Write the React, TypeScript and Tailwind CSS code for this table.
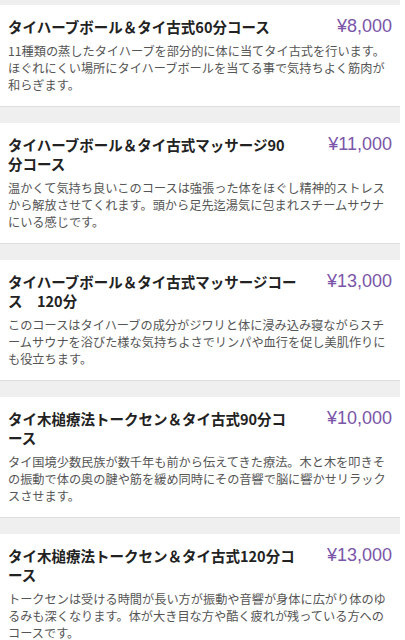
import React from "react";

type Course = { title: string[]; price: string; desc: string };

const courses: Course[] = [
  {
    title: ["タイハーブボール＆タイ古式60分コース"],
    price: "¥8,000",
    desc: "11種類の蒸したタイハーブを部分的に体に当てタイ古式を行います。ほぐれにくい場所にタイハーブボールを当てる事で気持ちよく筋肉が和らぎます。",
  },
  {
    title: ["タイハーブボール＆タイ古式マッサージ90", "分コース"],
    price: "¥11,000",
    desc: "温かくて気持ち良いこのコースは強張った体をほぐし精神的ストレスから解放させてくれます。頭から足先迄湯気に包まれスチームサウナにいる感じです。",
  },
  {
    title: ["タイハーブボール＆タイ古式マッサージコー", "ス　120分"],
    price: "¥13,000",
    desc: "このコースはタイハーブの成分がジワリと体に浸み込み寝ながらスチームサウナを浴びた様な気持ちよさでリンパや血行を促し美肌作りにも役立ちます。",
  },
  {
    title: ["タイ木槌療法トークセン＆タイ古式90分コ", "ース"],
    price: "¥10,000",
    desc: "タイ国境少数民族が数千年も前から伝えてきた療法。木と木を叩きその振動で体の奥の腱や筋を緩め同時にその音響で脳に響かせリラックスさせます。",
  },
  {
    title: ["タイ木槌療法トークセン＆タイ古式120分コ", "ース"],
    price: "¥13,000",
    desc: "トークセンは受ける時間が長い方が振動や音響が身体に広がり体のゆるみも深くなります。体が大き目な方や酷く疲れが残っている方へのコースです。",
  },
];

export default function App() {
  return (
    <div className="w-[405px] h-[640px] overflow-hidden bg-white">
      <div
        className="w-[400px] bg-[#efeff0] flex flex-col gap-[17px] pt-[5px]"
        style={{ fontFamily: '"Noto Sans CJK JP", "Noto Sans", sans-serif' }}
      >
        {courses.map((c, i) => (
          <div
            key={i}
            className="bg-white px-2 pt-3 pb-3 shadow-[0_1px_0_#dedede]"
          >
            <div className="flex items-start justify-between">
              <div className="w-[304px] text-[14.5px] leading-[19px] font-bold text-[#222222]">
                {c.title.map((line, j) => (
                  <div key={j} className="whitespace-nowrap">
                    {line}
                  </div>
                ))}
              </div>
              <div
                className="text-[18px] leading-[19px] text-[#7b55a8] text-right whitespace-nowrap"
                style={{ fontFamily: '"Liberation Sans", Arial, sans-serif' }}
              >
                {c.price}
              </div>
            </div>
            <div className="mt-[7px] text-[12.2px] leading-[17px] text-[#555555]">
              {c.desc}
            </div>
          </div>
        ))}
      </div>
    </div>
  );
}
